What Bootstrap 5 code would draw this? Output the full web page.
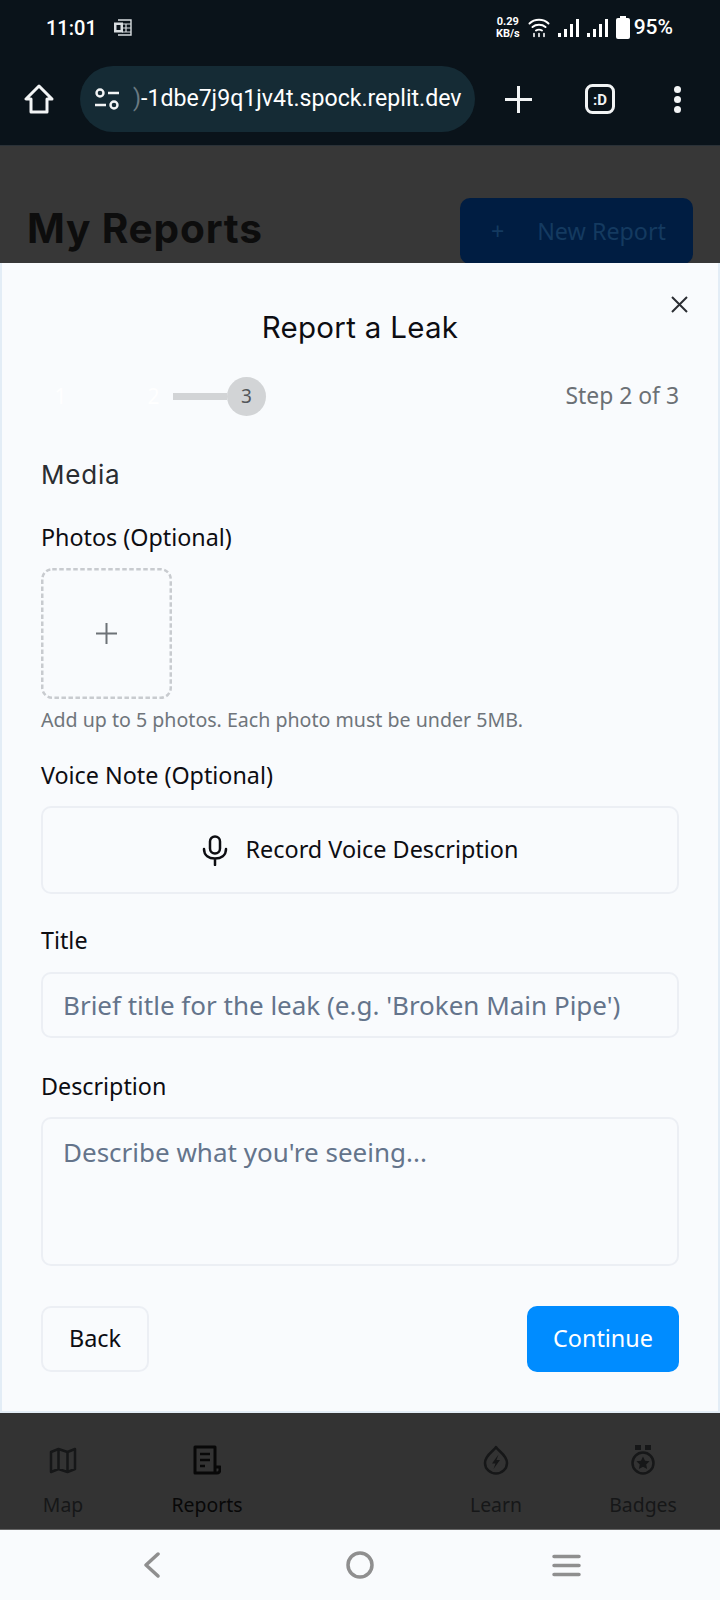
<!DOCTYPE html>
<html>
<head>
    <meta charset="utf-8" />
    <meta name="viewport" content="width=device-width, initial-scale=1.0" />
    <title>Report a Leak</title>
    <link href="https://cdn.jsdelivr.net/npm/bootstrap@5.3.0/dist/css/bootstrap.min.css" rel="stylesheet">
    <style>
        body { width: 720px; height: 1600px; overflow: hidden; background: #f9fbfd; font-family: "Noto Sans", sans-serif; }
        svg { display: block; flex: none; }

        .chrome-bar { height: 146px; background: #0a131a; color: #fff; font-family: Roboto, sans-serif; border-bottom: 1px solid #2a3137; }
        .status-row { height: 55px; margin-bottom: 11px; padding: 0 47px 0 46px; }
        .status-time { font-size: 20px; font-weight: 500; }
        .speed-text { font-size: 11px; font-weight: 700; line-height: 12px; text-align: center; }
        .battery-text { font-size: 21px; font-weight: 500; }
        .tool-row { height: 66px; padding: 0 0 0 24px; }
        .url-pill { width: 395px; height: 66px; margin-left: 26px; border-radius: 33px; background: #152b35; padding-left: 14px; overflow: hidden; }
        .url-text { font-size: 23.1px; white-space: nowrap; margin-left: 13px; }
        .url-fade { color: #6a7a82; }
        .tool-plus { margin-left: 30px; }
        .tool-tab { margin-left: 53px; }
        .tool-dots { margin-left: 58px; }

        .page-dim { height: 117px; background: #373737; padding: 52px 27px 0 27px; overflow: hidden; }
        .page-title { font-family: "Inter", sans-serif; font-size: 40.6px; font-weight: 700; color: #0d0d0d; margin: 0; line-height: 62px; letter-spacing: .8px; }
        .new-report { width: 233px; height: 66px; background: #001d42; border-radius: 10px; color: #143a60; font-size: 23.3px; padding: 0 27px 0 31px; }

        .sheet { height: 1150px; background: #f9fbfd; border-left: 2px solid #e3edf6; border-right: 2px solid #e3edf6; border-bottom: 2px solid #e3edf6; padding: 0 39px; position: relative; }
        .sheet-close { position: absolute; right: 30px; top: 33px; background: none; border: 0; padding: 0; }
        .sheet-title { font-family: "Inter", sans-serif; font-size: 29.5px; font-weight: 400; color: #0d0d12; margin: 0; padding-top: 45px; line-height: 38px; text-align: center; letter-spacing: .3px; }
        .step-row { margin-top: 31px; height: 39px; }
        .step-dot { width: 39px; height: 39px; border-radius: 50%; color: #fff; font-size: 21px; }
        .step-dot-todo { background: #d2d4d6; color: #52565a; font-size: 19px; }
        .step-line { width: 54px; height: 7px; }
        .step-line-todo { background: #d2d4d6; }
        .step-label { font-size: 22.9px; color: #6b7075; }
        .section-name { font-family: "Inter", sans-serif; font-size: 26px; font-weight: 400; color: #2a2d31; margin: 43px 0 0; line-height: 32px; letter-spacing: .8px; }
        .field-name { font-size: 23.3px; color: #0d0d12; margin: 0; line-height: 30px; }
        .field-photos { margin-top: 31px; }
        .field-voice { margin-top: 28px; }
        .field-title { margin-top: 31px; }
        .field-desc { margin-top: 33px; }
        .photo-add { width: 131px; height: 131px; border: 0; background: none; padding: 0; margin-top: 16px; }
        .help-line { font-size: 19.6px; color: #6f757b; line-height: 24px; margin-top: 9px; }
        .record-btn { height: 88px; border: 2px solid #eceff4; border-radius: 10px; background: none; color: #0d0d12; font-size: 23.4px; gap: 18px; margin-top: 16px; width: 100%; }
        .sheet .form-control { background: none; border: 2px solid #eceff4; border-radius: 10px; font-size: 26px; color: #0d0d12; padding: 0 20px; box-shadow: none; resize: none; }
        .sheet .form-control::placeholder { color: #64748b; opacity: 1; }
        .title-input { height: 66px; margin-top: 17px; }
        .desc-input { height: 149px; margin-top: 16px; padding-top: 14px !important; }
        .foot-row { margin-top: 40px; }
        .back-btn { width: 108px; height: 66px; border: 2px solid #eceff4; border-radius: 10px; background: none; color: #0d0d12; font-size: 23.4px; }
        .go-btn { width: 152px; height: 66px; border: 0; border-radius: 10px; background: #008cff; color: #fff; font-size: 23.4px; }

        .tab-dim { height: 117px; background: #333; border-bottom: 1px solid #666; position: relative; }
        .tab-item { position: absolute; top: 32px; width: 120px; margin-left: -60px; color: #161718; font-size: 19.4px; line-height: 26px; gap: 17px; }
        .tab-on { color: #080808; }
        .tab-map { left: 63px; }
        .tab-reports { left: 207px; }
        .tab-learn { left: 496px; }
        .tab-badges { left: 643px; }

        .sys-nav { height: 70px; background: #f9fbfd; padding-left: 143px; }
        .sys-home { margin-left: 185px; }
        .sys-menu { margin-left: 178px; }
    </style>
</head>
<body>
    <header class="chrome-bar">
        <div class="status-row d-flex align-items-center justify-content-between">
            <div class="d-flex align-items-center gap-3">
                <span class="status-time">11:01</span>
                <svg width="19" height="17" viewBox="0 0 19 17"><path d="M5 1h13v15H5" fill="none" stroke="#d8dde0" stroke-width="1.4"/><path d="M9 5h9M9 9h9M9 13h9M13 5v8" stroke="#d8dde0" stroke-width="1.2"/><rect x="1" y="3.5" width="9" height="10" fill="#d8dde0"/><rect x="3.5" y="6" width="4" height="5" fill="#0a131a"/></svg>
            </div>
            <div class="d-flex align-items-center">
                <div class="speed-text">0.29<br>KB/s</div>
                <svg class="ms-2" width="22" height="20" viewBox="0 0 22 20" fill="none" stroke="#fff" stroke-width="2" stroke-linecap="round"><path d="M1.5 5.5c5-5 14-5 19 0M4.5 9c3.500-3 9.500-3 13 0M8 12.500c1.500-1 4.500-1 6 0"/><path d="M6 15.500v3M11 15.500v3M16 15.500v3" stroke-width="1.600"/></svg>
                <svg class="ms-2" width="21" height="20" viewBox="0 0 21 20" fill="#fff"><rect x="0" y="15" width="3" height="4"/><rect x="6" y="11" width="3" height="8"/><rect x="12" y="6" width="3" height="13"/><rect x="18" y="1" width="3" height="18"/></svg>
                <svg class="ms-2" width="21" height="20" viewBox="0 0 21 20" fill="#fff"><rect x="0" y="15" width="3" height="4"/><rect x="6" y="11" width="3" height="8"/><rect x="12" y="6" width="3" height="13"/><rect x="18" y="1" width="3" height="18"/></svg>
                <svg class="ms-2" width="14" height="23" viewBox="0 0 14 23" fill="#fff"><rect x="4" y="0" width="6" height="3"/><rect x="0" y="2" width="14" height="21" rx="2"/></svg>
                <span class="battery-text ms-1">95%</span>
            </div>
        </div>
        <div class="tool-row d-flex align-items-center">
            <svg width="30" height="30" viewBox="0 0 30 30" fill="none" stroke="#f2f4f5" stroke-width="3" stroke-linejoin="round"><path d="M15 2 2 15h5v13h16V15h5z"/></svg>
            <div class="url-pill d-flex align-items-center">
                <svg width="26" height="24" viewBox="0 0 26 24" fill="none" stroke="#f2f4f5" stroke-width="2.400"><circle cx="6" cy="6" r="3.500"/><path d="M14 6h11M1 18h11"/><circle cx="20" cy="18" r="3.500"/></svg>
                <span class="url-text"><span class="url-fade">)</span>-1dbe7j9q1jv4t.spock.replit.dev</span>
            </div>
            <svg class="tool-plus" width="27" height="27" viewBox="0 0 27 27" stroke="#f2f4f5" stroke-width="3"><path d="M13.500 0v27M0 13.500h27"/></svg>
            <svg class="tool-tab" width="30" height="30" viewBox="0 0 30 30"><rect x="1.500" y="1.500" width="27" height="27" rx="6" fill="none" stroke="#f2f4f5" stroke-width="3"/><text x="15" y="20.500" text-anchor="middle" fill="#f2f4f5" font-family="Roboto, sans-serif" font-size="15" font-weight="700">:D</text></svg>
            <svg class="tool-dots" width="9" height="27" viewBox="0 0 9 27" fill="#f2f4f5"><circle cx="4.500" cy="3.500" r="3.500"/><circle cx="4.500" cy="13.500" r="3.500"/><circle cx="4.500" cy="23.500" r="3.500"/></svg>
        </div>
    </header>

    <div class="page-dim d-flex justify-content-between align-items-start">
        <h1 class="page-title">My Reports</h1>
        <div class="new-report d-flex justify-content-between align-items-center"><span>+</span><span>New Report</span></div>
    </div>

    <section class="sheet">
        <button class="sheet-close" type="button" aria-label="Close">
            <svg width="17" height="17" viewBox="0 0 17 17" stroke="#2b2e33" stroke-width="2"><path d="M1 1l15 15M16 1 1 16"/></svg>
        </button>
        <h2 class="sheet-title">Report a Leak</h2>
        <div class="step-row d-flex align-items-center justify-content-between">
            <div class="d-flex align-items-center">
                <span class="step-dot d-flex align-items-center justify-content-center">1</span>
                <span class="step-line"></span>
                <span class="step-dot d-flex align-items-center justify-content-center">2</span>
                <span class="step-line step-line-todo"></span>
                <span class="step-dot step-dot-todo d-flex align-items-center justify-content-center">3</span>
            </div>
            <span class="step-label">Step 2 of 3</span>
        </div>
        <h3 class="section-name">Media</h3>
        <label class="field-name field-photos d-block">Photos (Optional)</label>
        <button class="photo-add d-block" type="button" aria-label="Add photo">
            <svg width="131" height="131" viewBox="0 0 131 131" fill="none"><rect x="1.250" y="1.250" width="128.500" height="128.500" rx="10" stroke="#c8cbcf" stroke-width="2.500" stroke-dasharray="4.500 2.500"/><path d="M65.500 55v21M55 65.500h21" stroke="#6d7277" stroke-width="2"/></svg>
        </button>
        <div class="help-line">Add up to 5 photos. Each photo must be under 5MB.</div>
        <label class="field-name field-voice d-block">Voice Note (Optional)</label>
        <button class="record-btn d-flex align-items-center justify-content-center" type="button">
            <svg width="26" height="31" viewBox="0 0 26 31" fill="none" stroke="#0d0d12" stroke-width="2.500" stroke-linecap="round"><rect x="8" y="1.500" width="10" height="17" rx="5"/><path d="M2 14c0 6.500 5 9.500 11 9.500s11-3 11-9.500M13 23.500V30"/></svg>
            <span>Record Voice Description</span>
        </button>
        <label class="field-name field-title d-block" for="leak-title">Title</label>
        <input id="leak-title" type="text" class="form-control title-input" placeholder="Brief title for the leak (e.g. 'Broken Main Pipe')" />
        <label class="field-name field-desc d-block" for="leak-desc">Description</label>
        <textarea id="leak-desc" class="form-control desc-input" placeholder="Describe what you're seeing..."></textarea>
        <div class="foot-row d-flex justify-content-between">
            <button class="back-btn" type="button">Back</button>
            <button class="go-btn" type="button">Continue</button>
        </div>
    </section>

    <nav class="tab-dim">
        <div class="tab-item tab-map d-flex flex-column align-items-center">
            <svg width="28" height="30" viewBox="0 0 28 30" fill="none" stroke="#161718" stroke-width="2.500" stroke-linejoin="round"><path d="M2 7v20l7.500-3 9 3 7.500-3V4l-7.500 3-9-3zM9.500 4v20M18.500 7v20"/></svg>
            <span>Map</span>
        </div>
        <div class="tab-item tab-reports tab-on d-flex flex-column align-items-center">
            <svg width="28" height="30" viewBox="0 0 28 30" fill="none" stroke="#080808" stroke-width="3" stroke-linejoin="round"><path d="M22 28H2V2h20zM22 22h5v3a3 3 0 0 1-3 3h-2"/><path d="M7 9h10M7 15h10M7 21h5" stroke-width="2.500"/></svg>
            <span>Reports</span>
        </div>
        <div class="tab-item tab-learn d-flex flex-column align-items-center">
            <svg width="26" height="30" viewBox="0 0 26 30" fill="none" stroke="#161718" stroke-width="2.500" stroke-linejoin="round"><path d="M13 2c2 4 11 8 11 16a11 10.500 0 0 1-22 0C2 10 11 6 13 2z"/><path d="M15.500 9.500l-6.500 9h3.500l-2 5.500 6.500-9h-3.500z" fill="#161718" stroke="none"/></svg>
            <span>Learn</span>
        </div>
        <div class="tab-item tab-badges d-flex flex-column align-items-center">
            <svg width="24" height="30" viewBox="0 0 24 30"><path d="M4 0h6v5H4zM14 0h6v5h-6z" fill="#161718"/><circle cx="12" cy="18" r="10.500" fill="none" stroke="#161718" stroke-width="2.500"/><path d="M12 11.500l2 4.200 4.600.6-3.400 3.100.9 4.600-4.100-2.300-4.100 2.300.9-4.600-3.400-3.100 4.600-.6z" fill="#161718"/></svg>
            <span>Badges</span>
        </div>
    </nav>

    <div class="sys-nav d-flex align-items-center">
        <svg width="18" height="26" viewBox="0 0 18 26" fill="none" stroke="#8f8f8f" stroke-width="3.500" stroke-linecap="round" stroke-linejoin="round"><path d="M15 2 3 13l12 11"/></svg>
        <svg class="sys-home" width="28" height="28" viewBox="0 0 28 28" fill="none" stroke="#8f8f8f" stroke-width="3.500"><circle cx="14" cy="14" r="12"/></svg>
        <svg class="sys-menu" width="29" height="23" viewBox="0 0 29 23" stroke="#8f8f8f" stroke-width="3.500" stroke-linecap="round"><path d="M2 2.500h25M2 11.500h25M2 20.500h25"/></svg>
    </div>

    <script src="https://cdn.jsdelivr.net/npm/bootstrap@5.3.0/dist/js/bootstrap.bundle.min.js"></script>
</body>
</html>
